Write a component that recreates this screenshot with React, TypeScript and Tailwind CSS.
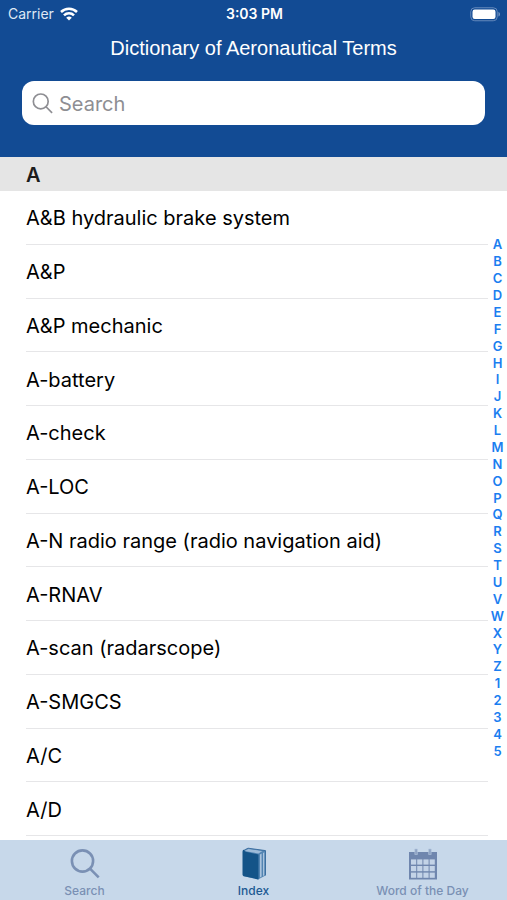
import React, { useState } from 'react';

const TERMS = [
  'A&B hydraulic brake system',
  'A&P',
  'A&P mechanic',
  'A-battery',
  'A-check',
  'A-LOC',
  'A-N radio range (radio navigation aid)',
  'A-RNAV',
  'A-scan (radarscope)',
  'A-SMGCS',
  'A/C',
  'A/D',
];

const LETTERS = 'ABCDEFGHIJKLMNOPQRSTUVWXYZ12345'.split('');

const WifiIcon = () => (
  <svg width="18" height="14" viewBox="0 0 18 14" fill="none" stroke="white" strokeWidth="2.5" aria-hidden="true">
    <path d="M1 5a11.4 11.4 0 0 1 16 0" />
    <path d="M4 8.4a7 7 0 0 1 10 0" />
    <path d="M9 13.6 6.2 10.8a4 4 0 0 1 5.6 0Z" fill="white" stroke="none" />
  </svg>
);

const BatteryIcon = () => (
  <svg width="31" height="15" viewBox="0 0 31 15" aria-hidden="true">
    <rect x="0.75" y="0.75" width="26.5" height="13" rx="4" fill="none" stroke="#6488bb" />
    <rect x="2.5" y="2.5" width="23" height="9.5" rx="2.2" fill="white" />
    <path d="M28.5 5v4.6c1.9-.7 1.9-3.9 0-4.6Z" fill="#7f9dc8" />
  </svg>
);

const SearchIcon = ({ size, stroke }: { size: number; stroke: number }) => (
  <svg width={size} height={size} viewBox="0 0 30 30" fill="none" stroke="currentColor" strokeWidth={stroke} aria-hidden="true">
    <circle cx="12.5" cy="12" r="10.6" />
    <path d="m20 19.6 8.7 8.7" />
  </svg>
);

const BookIcon = () => (
  <svg width="26" height="33" viewBox="0 0 26 33" aria-hidden="true">
    <path d="M2 4 7 1.2 24.5 3.6v24.8l-7.5 4L2 29Z" fill="#5284b2" />
    <path d="M3.5 4 7.3 2 21.5 4l-4 2.4Z" fill="#9dbbd8" />
    <path d="M19 7.6 20.6 6.6v23l-1.6.9Z" fill="#a9c3dd" />
    <path d="M22 6 23.3 5.2v23l-1.3.7Z" fill="#a9c3dd" />
    <path d="M1.5 5c0-1.8 1.3-2.6 2.6-2.4-1 .5-.8 1.8.6 2.2L17.5 7.4v25L3 29.2c-1-.3-1.5-.9-1.5-1.8Z" fill="#145488" />
    <path d="M4 2.7 7 1.2 24.5 3.6v24.8" fill="none" stroke="#34699c" strokeWidth="0.9" />
  </svg>
);

const CalendarIcon = () => (
  <svg width="30" height="32" viewBox="0 0 30 32" aria-hidden="true">
    <path d="M1 4h28v27.5H1Z" fill="#6f86ae" />
    <path d="M6.8 1h2.6v5.5H6.8ZM20.6 1h2.6v5.5h-2.6Z" fill="#8ea3c4" stroke="#b4c6de" strokeWidth="0.6" />
    {[11.4, 18, 24.6].map((y) =>
      [3, 9.2, 15.4, 21.6].map((x) => (
        <rect key={`${x}-${y}`} x={x} y={y} width="5.2" height="5.2" fill="#c3d3e7" />
      ))
    )}
  </svg>
);

const TABS = [
  { name: 'Search', icon: <SearchIcon size={30} stroke={2.6} /> },
  { name: 'Index', icon: <BookIcon /> },
  { name: 'Word of the Day', icon: <CalendarIcon /> },
];

const Header = () => (
  <header className="h-[157px] shrink-0 bg-[#124b94] text-white">
    <div className="grid h-7 grid-cols-3 items-center pl-2 pr-1.5 text-[14px] leading-4">
      <div className="flex items-center gap-1.5 text-[#dfe8f4]">
        <span>Carrier</span>
        <WifiIcon />
      </div>
      <span className="text-center font-semibold">3:03 PM</span>
      <div className="flex justify-end">
        <BatteryIcon />
      </div>
    </div>
    <h1 className="pt-2 text-center font-['Liberation_Sans',sans-serif] text-[20px] leading-6">
      Dictionary of Aeronautical Terms
    </h1>
    <label className="mx-[22px] mt-[21px] flex h-11 items-center gap-1.5 rounded-xl bg-white px-2.5 text-[#8e8e93]">
      <SearchIcon size={21} stroke={2.4} />
      <input
        type="text"
        aria-label="Search"
        placeholder="Search"
        className="min-w-0 flex-1 pt-0.5 text-[20px] leading-6 text-black outline-none placeholder:text-[#8e8e93]"
      />
    </label>
  </header>
);

const App = () => {
  const [activeTab, setActiveTab] = useState('Index');

  return (
    <div className="flex min-h-screen flex-col bg-white font-['Inter',sans-serif]">
      <Header />

      <main className="relative flex flex-1 flex-col">
        <h2 className="flex h-[34px] shrink-0 items-center bg-[#e5e5e5] pl-[26px] pt-0.5 text-[20px] font-semibold leading-6 text-[#1c1c1c]">
          A
        </h2>
        <ul className="flex flex-1 flex-col pb-1 pl-[26px] pr-[19px]">
          {TERMS.map((term) => (
            <li key={term} className="flex min-h-12 flex-1 border-b border-[#e6e6e8]">
              <a href="#" className="flex flex-1 items-center pt-0.5 text-[20px] leading-6 text-black">
                {term}
              </a>
            </li>
          ))}
        </ul>

        {/* quick jump letters, on top of the list */}
        <nav aria-label="Letters" className="absolute inset-y-0 right-0 flex w-[19px] flex-col justify-center pb-0.5">
          <div className="flex h-[523px] flex-col">
            {LETTERS.map((letter) => (
              <a
                key={letter}
                href="#"
                className="flex flex-1 items-center justify-center text-[13px] font-semibold leading-4 text-[#1a7ef0]"
              >
                {letter}
              </a>
            ))}
          </div>
        </nav>
      </main>

      <nav className="grid h-[60px] shrink-0 grid-cols-3 bg-[#c7d8ea]">
        {TABS.map((tab) => (
          <button
            key={tab.name}
            type="button"
            onClick={() => setActiveTab(tab.name)}
            className={`flex flex-col items-center text-[12px] font-medium leading-4 ${
              activeTab === tab.name ? 'text-[#1c5a93]' : 'text-[#7a90b4]'
            }`}
          >
            <span className="flex h-[43px] items-center pt-1">{tab.icon}</span>
            {tab.name}
          </button>
        ))}
      </nav>
    </div>
  );
};

export default App;
